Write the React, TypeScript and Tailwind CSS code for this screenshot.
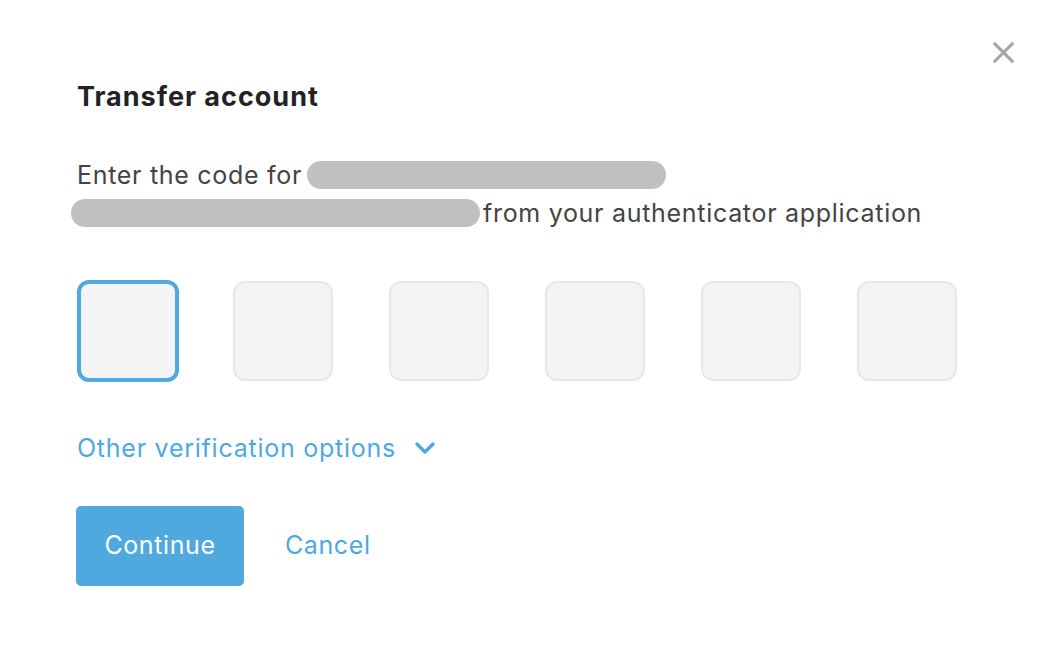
import React from "react";

export default function App() {
  return (
    <div className="w-[1055px] h-[665px] bg-white relative" style={{ fontFamily: "Inter, 'Liberation Sans', sans-serif" }}>
      <button className="absolute right-[40px] top-[41px] text-[#a6a6a6]" aria-label="close">
        <svg width="23" height="23" viewBox="0 0 24 24" fill="none" stroke="currentColor" strokeWidth="3.2" strokeLinecap="square">
          <path d="M3 3L21 21M21 3L3 21" />
        </svg>
      </button>
      <div className="pl-[77px] pt-[79px]">
        <h1 className="text-[27px] leading-[36px] font-bold text-[#222] tracking-[1px]">Transfer account</h1>
        <div className="mt-[41px] text-[25px] leading-[38px] text-[#444] tracking-[0.7px] w-[900px]">
          <span>Enter the code for </span>
          <span className="inline-block align-middle w-[359px] h-[28px] rounded-full bg-[#c0c0c0] -mt-[4px] -ml-[3px]"></span>
          <br />
          <span className="inline-block align-middle w-[409px] h-[28px] rounded-full bg-[#c0c0c0] -ml-[6px] -mt-[4px]"></span>
          <span className="ml-[3px]">from your authenticator application</span>
        </div>
        <div className="mt-[48px] flex items-center gap-[56px] h-[102px]">
          <div className="w-[102px] h-[102px] rounded-[12px] bg-[#f4f4f4] border-[4px] border-[#4fa8de]"></div>
          <div className="w-[100px] h-[100px] rounded-[12px] bg-[#f4f4f4] border-[2px] border-[#e8e8e8] -ml-[2px]"></div>
          <div className="w-[100px] h-[100px] rounded-[12px] bg-[#f4f4f4] border-[2px] border-[#e8e8e8]"></div>
          <div className="w-[100px] h-[100px] rounded-[12px] bg-[#f4f4f4] border-[2px] border-[#e8e8e8]"></div>
          <div className="w-[100px] h-[100px] rounded-[12px] bg-[#f4f4f4] border-[2px] border-[#e8e8e8]"></div>
          <div className="w-[100px] h-[100px] rounded-[12px] bg-[#f4f4f4] border-[2px] border-[#e8e8e8]"></div>
        </div>
        <div className="mt-[49px] flex items-center text-[25px] leading-[34px] text-[#4fa8de] tracking-[0.75px]">
          <span>Other verification options</span>
          <svg className="ml-[18px]" width="22" height="14" viewBox="0 0 22 14" fill="none" stroke="currentColor" strokeWidth="3.4" strokeLinecap="round" strokeLinejoin="round">
            <path d="M3 3L11 11L19 3" />
          </svg>
        </div>
        <div className="mt-[41px] flex items-center">
          <button className="w-[168px] h-[80px] rounded-[5px] bg-[#4fa8de] text-white text-[25px] tracking-[0.6px] -ml-[1px]">Continue</button>
          <button className="ml-[41px] text-[25px] text-[#4fa8de] tracking-[0.6px]">Cancel</button>
        </div>
      </div>
    </div>
  );
}
